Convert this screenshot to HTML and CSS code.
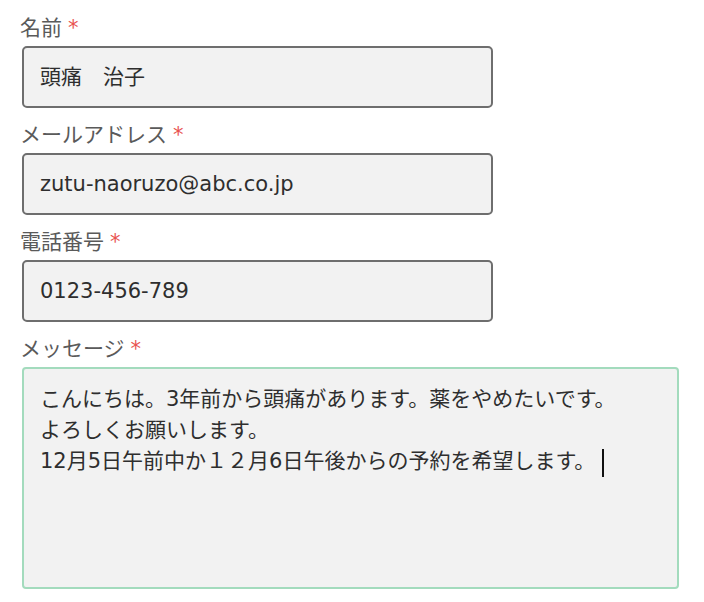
FILE: index.html
```html
<!DOCTYPE html>
<html lang="ja">
<head>
<meta charset="utf-8">
<link rel="stylesheet" href="styles.css">
</head>
<body>
<form class="form">
  <div class="field">
    <label class="label">名前<span class="req">*</span></label>
    <div class="input">頭痛　治子</div>
  </div>
  <div class="field">
    <label class="label">メールアドレス<span class="req">*</span></label>
    <div class="input">zutu-naoruzo@abc.co.jp</div>
  </div>
  <div class="field">
    <label class="label">電話番号<span class="req">*</span></label>
    <div class="input">0123-456-789</div>
  </div>
  <div class="field">
    <label class="label">メッセージ<span class="req">*</span></label>
    <div class="textarea">こんにちは。3年前から頭痛があります。薬をやめたいです。<br>よろしくお願いします。<br>12月5日午前中か１２月6日午後からの予約を希望します。<span class="caret"></span></div>
  </div>
</form>
</body>
</html>
```

FILE: styles.css
```css
html, body {
  margin: 0;
  padding: 0;
  background: #ffffff;
}
body {
  font-family: "DejaVu Sans", "Noto Sans CJK JP", sans-serif;
  color: #333333;
}
.form {
  padding: 13px 0 0 22px;
  display: flex;
  flex-direction: column;
  gap: 12px;
}
.field {
  display: flex;
  flex-direction: column;
  gap: 3px;
}
.label {
  display: block;
  font-size: 21px;
  line-height: 30px;
  height: 30px;
  color: #5a5a5a;
  margin-left: -2px;
}
.req {
  color: #e8524f;
  margin-left: 6px;
}
.input {
  box-sizing: border-box;
  width: 471px;
  height: 62px;
  border: 2px solid #6e6e6e;
  border-radius: 5px;
  background: #f2f2f2;
  padding: 0 16px;
  font-size: 21px;
  line-height: 58px;
  color: #2e2e2e;
}
.textarea {
  box-sizing: border-box;
  width: 657px;
  height: 222px;
  border: 2px solid #a3dbbd;
  border-radius: 4px;
  background: #f2f2f2;
  padding: 15px 16px;
  font-size: 21px;
  line-height: 31px;
  color: #2e2e2e;
}
.caret {
  display: inline-block;
  width: 1.5px;
  height: 28px;
  background: #111111;
  vertical-align: -9px;
  margin-left: 7px;
}
```
